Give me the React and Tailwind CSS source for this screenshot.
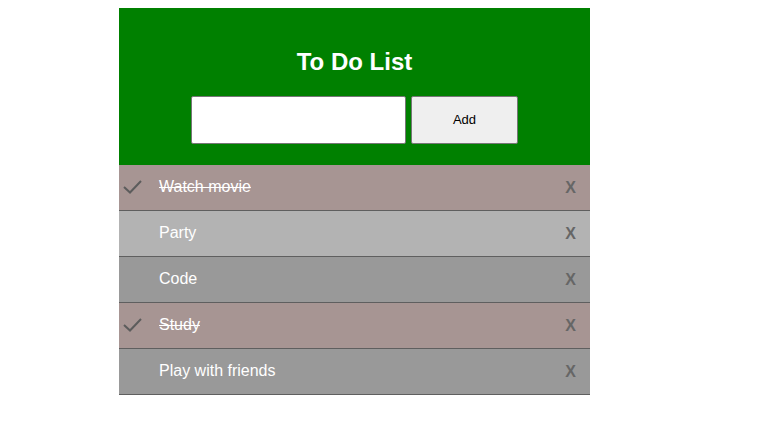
const todos = [
  { text: "Watch movie", done: true, bg: "bg-[#a79593]" },
  { text: "Party", done: false, bg: "bg-[#b3b3b3]" },
  { text: "Code", done: false, bg: "bg-[#999999]" },
  { text: "Study", done: true, bg: "bg-[#a79593]" },
  { text: "Play with friends", done: false, bg: "bg-[#999999]" },
];

function Check() {
  return (
    <svg width="20" height="16" viewBox="0 0 20 16" className="absolute left-[4px] top-[14px]">
      <path d="M1 8 L7 13.5 L18 2" fill="none" stroke="#5c5c5c" strokeWidth="2" />
    </svg>
  );
}

export default function App() {
  return (
    <div className="w-full min-h-[447px] bg-white pt-2 font-['Liberation_Sans',Arial,sans-serif]">
      <div className="ml-[119px] w-[471px]">
        {/* HEADER */}
        <div className="bg-[#008000] pt-10 pb-[21px] flex flex-col items-center">
          <h1 className="text-white text-[24px] leading-[28px] font-bold mb-5">To Do List</h1>
          <div className="flex gap-[5px]">
            <input
              type="text"
              className="w-[215px] h-[48px] bg-white border border-[#767676] rounded-[2px] outline-none"
            />
            <button className="w-[107px] h-[48px] bg-[#efefef] border border-[#767676] rounded-[2px] text-[13px] text-black">
              Add
            </button>
          </div>
        </div>

        {/* LIST */}
        <ul>
          {todos.map((t) => (
            <li
              key={t.text}
              className={`relative h-[46px] border-b border-[#5f5f5f] flex items-center pl-10 pr-[14px] pb-[2px] text-white text-[16px] ${t.bg}`}
            >
              {t.done && <Check />}
              <span className={t.done ? "line-through" : ""}>{t.text}</span>
              <span className="ml-auto text-[16px] font-bold text-[#666666] mt-[2px]">X</span>
            </li>
          ))}
        </ul>
      </div>
    </div>
  );
}
